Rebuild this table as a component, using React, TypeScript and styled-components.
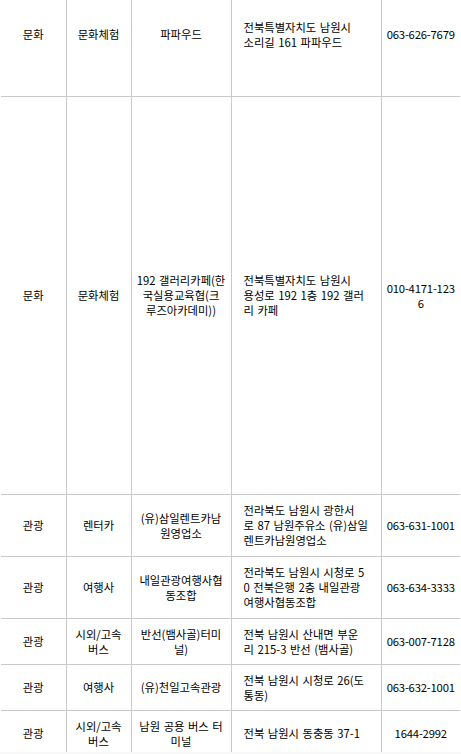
import React from "react";
import styled, { createGlobalStyle } from "styled-components";

const GlobalStyle = createGlobalStyle`
  html, body {
    margin: 0;
    padding: 0;
    background: #f8f8f8;
  }
  body {
    font-family: "Noto Sans CJK KR", "Noto Sans", sans-serif;
  }
`;

type Row = {
  cells: string[][];
  height: number;
};

const rows: Row[] = [
  {
    height: 124,
    cells: [
      ["문화"],
      ["문화체험"],
      ["파파우드"],
      ["전북특별자치도 남원시", "소리길 161 파파우드"],
      ["063-626-7679"],
    ],
  },
  {
    height: 398,
    cells: [
      ["문화"],
      ["문화체험"],
      ["192 갤러리카페(한", "국실용교육협(크", "루즈아카데미))"],
      ["전북특별자치도 남원시", "용성로 192 1층 192 갤러", "리 카페"],
      ["010-4171-123", "6"],
    ],
  },
  {
    height: 62,
    cells: [
      ["관광"],
      ["렌터카"],
      ["(유)삼일렌트카남", "원영업소"],
      ["전라북도 남원시 광한서", "로 87 남원주유소 (유)삼일", "렌트카남원영업소"],
      ["063-631-1001"],
    ],
  },
  {
    height: 62,
    cells: [
      ["관광"],
      ["여행사"],
      ["내일관광여행사협", "동조합"],
      ["전라북도 남원시 시청로 5", "0 전북은행 2층 내일관광", "여행사협동조합"],
      ["063-634-3333"],
    ],
  },
  {
    height: 46,
    cells: [
      ["관광"],
      ["시외/고속", "버스"],
      ["반선(뱀사골)터미", "널)"],
      ["전북 남원시 산내면 부운", "리 215-3 반선 (뱀사골)"],
      ["063-007-7128"],
    ],
  },
  {
    height: 46,
    cells: [
      ["관광"],
      ["여행사"],
      ["(유)천일고속관광"],
      ["전북 남원시 시청로 26(도", "통동)"],
      ["063-632-1001"],
    ],
  },
  {
    height: 46,
    cells: [
      ["관광"],
      ["시외/고속", "버스"],
      ["남원 공용 버스 터", "미널"],
      ["전북 남원시 동충동 37-1"],
      ["1644-2992"],
    ],
  },
];

const columns = [65, 65, 100, 150, 79];

export default function App() {
  return (
    <>
      <GlobalStyle />
      <Viewport>
        <Table>
          <colgroup>
            {columns.map((w, i) => (
              <col key={i} style={{ width: w }} />
            ))}
          </colgroup>
          <tbody>
            {rows.map((row, r) => (
              <Tr key={r} $h={row.height}>
                {row.cells.map((lines, c) => (
                  <Td key={c} $left={c === 3}>
                    {lines.map((line, l) => (
                      <React.Fragment key={l}>
                        {l > 0 && <br />}
                        {line}
                      </React.Fragment>
                    ))}
                  </Td>
                ))}
              </Tr>
            ))}
          </tbody>
        </Table>
      </Viewport>
    </>
  );
}

const Viewport = styled.div`
  height: 752px;
  overflow: hidden;
  background: #fff;
  padding-left: 1px;
`;

const Table = styled.table`
  width: 459px;
  table-layout: fixed;
  border-collapse: collapse;
  margin-top: -28px;
`;

const Tr = styled.tr<{ $h: number }>`
  height: ${(p) => p.$h}px;
`;

const Td = styled.td<{ $left?: boolean }>`
  padding: ${(p) => (p.$left ? "0 12px" : "0 3px")};
  border: 1px solid #c9c9c9;
  font-size: 11.3px;
  line-height: 15px;
  word-spacing: 1px;
  color: #000;
  white-space: nowrap;
  vertical-align: middle;
  text-align: ${(p) => (p.$left ? "left" : "center")};

  &:first-child {
    border-left: none;
  }
  &:last-child {
    border-right: none;
    letter-spacing: -0.2px;
  }
`;
